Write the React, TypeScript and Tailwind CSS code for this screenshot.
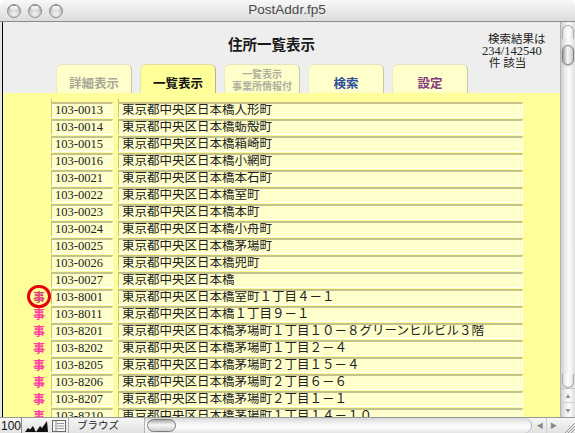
import React from "react";

type Row = { zip: string; addr: string; mark?: boolean; circled?: boolean };

const B = "東京都中央区日本橋";
const rows: Row[] = [
  { zip: "103-0013", addr: B + "人形町" },
  { zip: "103-0014", addr: B + "蛎殻町" },
  { zip: "103-0015", addr: B + "箱崎町" },
  { zip: "103-0016", addr: B + "小網町" },
  { zip: "103-0021", addr: B + "本石町" },
  { zip: "103-0022", addr: B + "室町" },
  { zip: "103-0023", addr: B + "本町" },
  { zip: "103-0024", addr: B + "小舟町" },
  { zip: "103-0025", addr: B + "茅場町" },
  { zip: "103-0026", addr: B + "兜町" },
  { zip: "103-0027", addr: B },
  { zip: "103-8001", addr: B + "室町１丁目４－１", mark: true, circled: true },
  { zip: "103-8011", addr: B + "１丁目９－１", mark: true },
  { zip: "103-8201", addr: B + "茅場町１丁目１０－８グリーンヒルビル３階", mark: true },
  { zip: "103-8202", addr: B + "茅場町１丁目２－４", mark: true },
  { zip: "103-8205", addr: B + "茅場町２丁目１５－４", mark: true },
  { zip: "103-8206", addr: B + "茅場町２丁目６－６", mark: true },
  { zip: "103-8207", addr: B + "茅場町２丁目１－１", mark: true },
  { zip: "103-8210", addr: B + "茅場町１丁目１４－１０", mark: true },
];

function Light() {
  return (
    <div className="w-[14px] h-[14px] rounded-full border border-[#8e8e8e] bg-[radial-gradient(circle_at_50%_75%,#f4f4f4_0%,#d2d2d2_45%,#a9a9a9_100%)] shadow-[inset_0_1px_1px_rgba(0,0,0,0.25)] flex justify-center">
      <div className="mt-[1px] w-[8px] h-[4px] rounded-full bg-[linear-gradient(to_bottom,#ffffff,#e6e6e6)] opacity-90" />
    </div>
  );
}

function Field({ w, children }: { w: string; children: React.ReactNode }) {
  return (
    <div
      className={`${w} h-[16px] shrink-0 border-t-2 border-l border-r border-b border-t-[#c6c28c] border-l-[#c6c28c] border-r-white border-b-white bg-[#ffffcc] pl-[3px] leading-[13px] whitespace-nowrap overflow-hidden text-[12.5px] text-[#222] font-['Liberation_Serif','Noto_Sans_CJK_JP',serif]`}
    >
      {children}
    </div>
  );
}

function Tab({
  active,
  children,
}: {
  active?: boolean;
  children: React.ReactNode;
}) {
  return (
    <div
      className={`w-[76px] h-[29px] shrink-0 rounded-t-[6px] border-t border-l border-r ${
        active
          ? "bg-[#ffff99] border-t-[#e0dca0] border-l-[#e8e4b0] border-r-[#bcb680]"
          : "bg-[#ffffcc] border-t-[#e4e2c4] border-l-[#e8e8d8] border-r-[#c8c4a4]"
      } flex flex-col items-center font-['Noto_Sans_CJK_JP',sans-serif] font-bold`}
    >
      {children}
    </div>
  );
}

export default function App() {
  return (
    <div className="w-[575px] h-[433px] bg-white overflow-hidden font-['Liberation_Sans','Noto_Sans_CJK_JP',sans-serif]">
      <div className="w-full h-full flex flex-col rounded-t-[7px] overflow-hidden bg-[#e6e6e6]">
        {/* title bar */}
        <div className="h-[22px] shrink-0 flex items-center border-b border-[#8a8a8a] bg-[linear-gradient(to_bottom,#f8f8f8,#e9e9e9_50%,#dcdcdc)]">
          <div className="flex gap-[7px] ml-[7px] mt-[1px]">
            <Light />
            <Light />
            <Light />
          </div>
          <div className="flex-1 text-center text-[13.5px] text-[#4a4a4a] pr-[64px] font-['Liberation_Sans',sans-serif]">
            PostAddr.fp5
          </div>
        </div>

        {/* main */}
        <div className="h-[395px] shrink-0 flex">
          <div className="w-[2px] bg-[#e6e6e6]" />
          <div className="w-[558px] flex flex-col border-l border-black">
            {/* header */}
            <div className="h-[71px] shrink-0 bg-[#eeeeee] flex flex-col">
              <div className="h-[42px] flex items-start">
                <div className="ml-[225px] mt-[13px] leading-[18px] text-[14.5px] font-bold text-[#1a1a1a] font-['Noto_Sans_CJK_JP',sans-serif]">
                  住所一覧表示
                </div>
                <div className="ml-auto mr-[11px] mt-[11px] w-[67px] text-[12px] leading-[12px] text-[#222] font-['Liberation_Serif','Noto_Sans_CJK_JP',serif]">
                  <div className="ml-[6px] text-[11.5px]">検索結果は</div>
                  <div className="text-[12.5px]">234/142540</div>
                  <div className="ml-[7px] text-[11.5px]">件 該当</div>
                </div>
              </div>
              <div className="h-[29px] flex items-end gap-[8px] pl-[53px]">
                <Tab>
                  <div className="pt-[10px] leading-[15px] text-[12.5px] text-[#a9a896]">
                    詳細表示
                  </div>
                </Tab>
                <Tab active>
                  <div className="pt-[10px] leading-[15px] text-[12.5px] text-[#111]">
                    一覧表示
                  </div>
                </Tab>
                <Tab>
                  <div className="pt-[3px] text-[10px] text-[#b0af9e] text-center flex flex-col gap-[1px]">
                    <div className="leading-[11px]">一覧表示</div>
                    <div className="leading-[11px]">事業所情報付</div>
                  </div>
                </Tab>
                <Tab>
                  <div className="pt-[10px] leading-[15px] text-[12.5px] text-[#2c4f9e]">
                    検索
                  </div>
                </Tab>
                <Tab>
                  <div className="pt-[10px] leading-[15px] text-[12.5px] text-[#853a7e]">
                    設定
                  </div>
                </Tab>
              </div>
            </div>

            {/* yellow list */}
            <div className="flex-1 bg-[#ffff99] overflow-hidden pt-[6px]">
              <div className="h-[3px] flex">
                <div className="w-[48px]" />
                <div className="w-[1px] bg-[#c6c28c]" />
                <div className="w-[66px]" />
                <div className="w-[1px] bg-[#c6c28c]" />
              </div>
              <div className="flex flex-col gap-[1px]">
                {rows.map((r) => (
                  <div key={r.zip} className="flex h-[16px] items-center">
                    <div className="w-[48px] h-[16px] flex items-center justify-end pr-[6px]">
                      {r.mark && (
                        <div className="relative w-[12px] h-[16px] flex items-center justify-center">
                          <span
                            className={`text-[12px] leading-[16px] font-bold font-['Noto_Sans_CJK_JP',sans-serif] ${
                              r.circled ? "text-[#e0407a]" : "text-[#ff40a0]"
                            }`}
                          >
                            事
                          </span>
                          {r.circled && (
                            <div className="absolute left-[-6px] top-[-4px] w-[24px] h-[23px] rounded-full border-[3px] border-[#e6000c]" />
                          )}
                        </div>
                      )}
                    </div>
                    <Field w="w-[62px]">{r.zip}</Field>
                    <div className="w-[5px] shrink-0" />
                    <Field w="w-[405px]">{r.addr}</Field>
                  </div>
                ))}
              </div>
            </div>
          </div>

          {/* vertical scrollbar */}
          <div className="w-[15px] flex flex-col border-l border-[#b4b4b4] bg-[linear-gradient(to_right,#cfcfcf,#efefef_35%,#fbfbfb_60%,#dedede)]">
            <div className="mt-[3px] h-[14px] mx-[1px] rounded-t-full border-t border-x border-[#a8a8a8] bg-[linear-gradient(to_right,#e2e2e2,#ffffff_50%,#e6e6e6)]" />
            <div className="mt-[6px] h-[20px] mx-[1px] rounded-full border border-[#7e7e7e] bg-[linear-gradient(to_right,#a2a2a2,#f8f8f8_45%,#cacaca)] shadow-[0_1px_2px_rgba(0,0,0,0.25)]" />
            <div className="flex-1" />
            <div className="h-[14px] mx-[1px] rounded-b-full border-b border-x border-[#a8a8a8] bg-[linear-gradient(to_right,#e2e2e2,#ffffff_50%,#e6e6e6)]" />
            <div className="h-[14px] flex items-center justify-center border-t border-[#c4c4c4] text-[7px] text-[#8a8a8a] leading-none">
              ▲
            </div>
            <div className="h-[15px] flex items-center justify-center border-t border-[#d4d4d4] text-[7px] text-[#8a8a8a] leading-none">
              ▼
            </div>
          </div>
        </div>

        {/* bottom bar */}
        <div className="h-[16px] shrink-0 flex items-stretch border-t border-[#9a9a9a] bg-[linear-gradient(to_bottom,#f6f6f6,#e2e2e2)]">
          <div className="w-[22px] flex items-center pl-[1px] border-r border-[#8a8a8a] text-[12px] leading-none text-[#111] font-['Liberation_Sans',sans-serif]">
            100
          </div>
          <div className="w-[12px] flex items-end justify-center pb-[1px] ml-[2px]">
            <svg width="11" height="8" viewBox="0 0 11 8">
              <path d="M0 8 L3 4 L5 5.5 L8 2 L11 8 Z" fill="#111" />
            </svg>
          </div>
          <div className="w-[12px] flex items-end justify-center pb-[1px]">
            <svg width="12" height="12" viewBox="0 0 12 12">
              <path d="M0 12 L4 6 L6 8 L11 1 L12 12 Z" fill="#111" />
            </svg>
          </div>
          <div className="w-[16px] ml-[3px] flex items-center justify-center">
            <svg width="14" height="12" viewBox="0 0 14 12">
              <rect x="0.5" y="0.5" width="13" height="11" fill="#f4f4f4" stroke="#6a6a6a" />
              <line x1="4" y1="1" x2="4" y2="11" stroke="#8a8a8a" />
              <line x1="5" y1="3.5" x2="12" y2="3.5" stroke="#9a9a9a" />
              <line x1="5" y1="6" x2="12" y2="6" stroke="#9a9a9a" />
              <line x1="5" y1="8.5" x2="12" y2="8.5" stroke="#9a9a9a" />
            </svg>
          </div>
          <div className="w-[2px] border-r border-[#b0b0b0]" />
          <div className="ml-[8px] w-[44px] flex items-center text-[10.5px] leading-none text-[#222] font-['Noto_Sans_CJK_JP',sans-serif]">
            ブラウズ
          </div>
          <div className="w-[24px] border-r border-[#b4b4b4]" />
          <div className="flex-1 flex items-center rounded-r-full border-r border-[#b0b0b0] bg-[linear-gradient(to_bottom,#d8d8d8,#f6f6f6_40%,#ffffff_60%,#e4e4e4)] mr-[2px]">
            <div className="ml-[2px] w-[29px] h-[13px] rounded-full border border-[#7a7a7a] bg-[linear-gradient(to_bottom,#a8a8a8,#f8f8f8_45%,#cccccc)]" />
          </div>
          <div className="w-[12px] flex items-center justify-center text-[7px] text-[#8a8a8a] leading-none">
            ◀
          </div>
          <div className="w-[14px] flex items-center justify-center border-l border-[#d0d0d0] text-[7px] text-[#8a8a8a] leading-none">
            ▶
          </div>
          <div className="w-[15px] flex items-end justify-end">
            <svg width="13" height="13" viewBox="0 0 13 13">
              <line x1="3" y1="13" x2="13" y2="3" stroke="#9a9a9a" />
              <line x1="6" y1="13" x2="13" y2="6" stroke="#9a9a9a" />
              <line x1="9" y1="13" x2="13" y2="9" stroke="#9a9a9a" />
            </svg>
          </div>
        </div>
      </div>
    </div>
  );
}
